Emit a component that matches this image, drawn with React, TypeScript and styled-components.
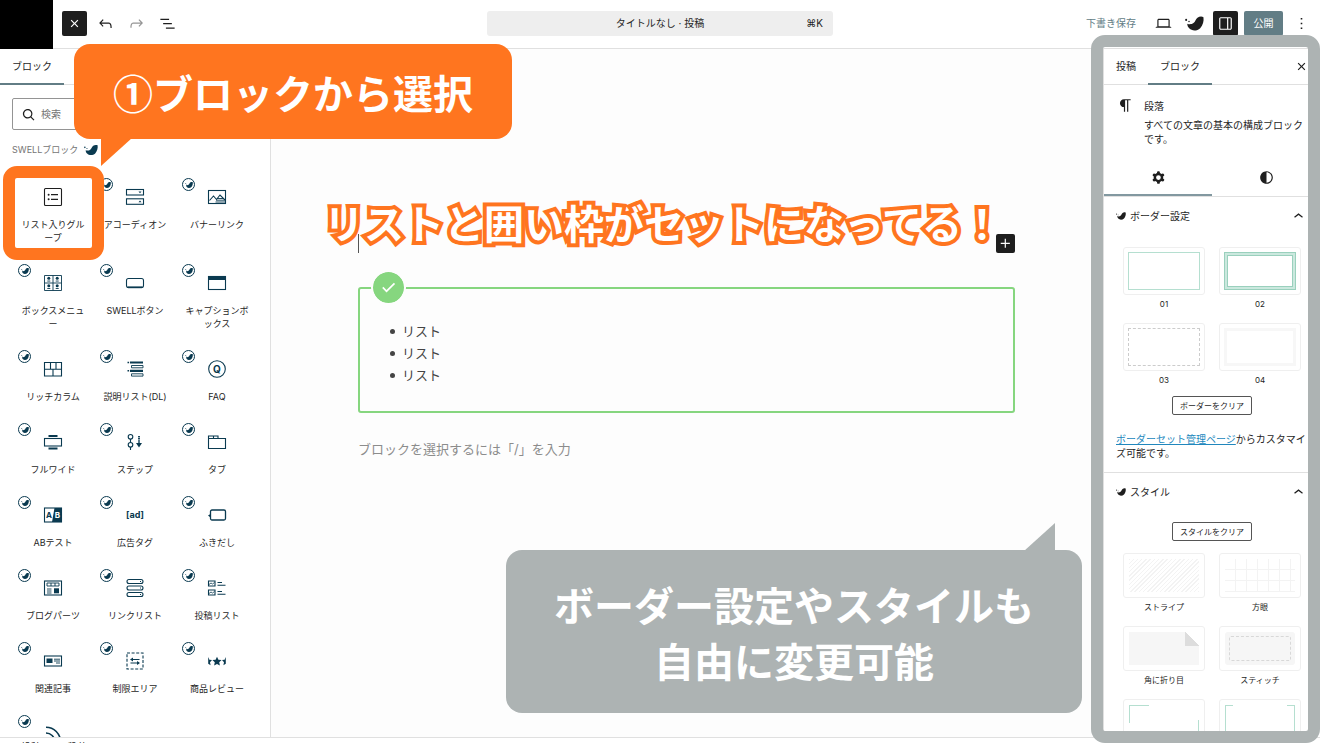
import React from "react";
import styled, { createGlobalStyle, css } from "styled-components";

const colors = {
  ink: "#1e1e1e",
  navy: "#0a3a50",
  muted: "#757575",
  line: "#e0e0e0",
  accent: "#627d85",
  orange: "#ff751f",
  gray: "#adb3b3",
  green: "#86d67f",
  mint: "#b5dfd0",
};

const GlobalStyle = createGlobalStyle`
  *, *::before, *::after { box-sizing: border-box; }
  body {
    margin: 0;
    background: #fff;
    color: ${colors.ink};
    font-family: Inter, "Noto Sans CJK JP", "DejaVu Sans", sans-serif;
    font-size: 10px;
    line-height: 14px;
  }
  button, input { font: inherit; color: inherit; }
  p, h1, h2, ul { margin: 0; padding: 0; }
  svg { display: block; flex: none; }
`;

/* ---------- Page frame ---------- */

const Shell = styled.div`
  position: relative;
  display: flex;
  flex-direction: column;
  height: 100vh;
  overflow: hidden;
`;

const Header = styled.header`
  display: grid;
  grid-template-columns: 1fr 346px 1fr;
  align-items: center;
  height: 49px;
  padding-bottom: 2px;
  flex: none;
  border-bottom: 1px solid ${colors.line};
`;

const HeaderGroup = styled.div<{ $end?: boolean }>`
  display: flex;
  align-items: center;
  gap: 6px;
  height: 46px;
  ${(p) => p.$end && css`justify-content: flex-end; padding-right: 6px;`}
`;

const SiteLogo = styled.div`
  width: 53px;
  height: 49px;
  margin-right: 3px;
  align-self: flex-start;
  background: #000;
`;

const IconButton = styled.button<{ $filled?: boolean; $dim?: boolean }>`
  display: flex;
  align-items: center;
  justify-content: center;
  width: 25px;
  height: 25px;
  padding: 0;
  border: 0;
  border-radius: 2px;
  background: ${(p) => (p.$filled ? colors.ink : "transparent")};
  color: ${(p) => (p.$filled ? "#fff" : p.$dim ? "#949494" : colors.ink)};
`;

const CommandBar = styled.button`
  display: grid;
  grid-template-columns: 1fr auto 1fr;
  align-items: center;
  height: 25px;
  padding: 0 10px;
  border: 0;
  border-radius: 3px;
  background: #eee;

  kbd {
    grid-column: 3;
    justify-self: end;
    font: inherit;
  }
  span { grid-column: 2; }
`;

const DraftButton = styled.button`
  padding: 0 9px;
  border: 0;
  background: none;
  color: ${colors.accent};
`;

const PublishButton = styled.button`
  width: 39px;
  height: 25px;
  padding: 0;
  border: 0;
  border-radius: 2px;
  background: ${colors.accent};
  color: #fff;
`;

const Body = styled.div`
  display: flex;
  flex: 1;
  min-height: 0;
`;

const Footer = styled.footer`
  display: flex;
  align-items: center;
  gap: 26px;
  height: 19px;
  margin-bottom: -13px;
  padding: 0 21px;
  flex: none;
  border-top: 1px solid ${colors.line};
  background: #fff;
`;

/* ---------- Block inserter ---------- */

const Inserter = styled.aside`
  width: 271px;
  flex: none;
  overflow: hidden;
  border-right: 1px solid ${colors.line};
`;

const TabBar = styled.div`
  display: flex;
  height: 36px;
  border-bottom: 1px solid ${colors.line};
`;

const Tab = styled.button<{ $active?: boolean }>`
  height: 36px;
  padding: 0 12px;
  border: 0;
  border-bottom: 2px solid ${(p) => (p.$active ? colors.accent : "transparent")};
  background: none;
`;

const SearchBox = styled.label`
  display: flex;
  align-items: center;
  gap: 3px;
  height: 32px;
  margin: 13px 12px 0;
  padding: 0 6px;
  border: 1px solid #949494;
  border-radius: 2px;

  input {
    flex: 1;
    min-width: 0;
    padding: 0;
    border: 0;
    outline: 0;
    background: none;
  }
  input::placeholder { color: ${colors.muted}; opacity: 1; }
`;

const CategoryTitle = styled.h2`
  display: flex;
  align-items: center;
  gap: 6px;
  height: 14px;
  margin: 13px 12px 17px;
  color: ${colors.muted};
  font-size: 9px;
  font-weight: 400;

  svg { color: ${colors.navy}; }
`;

const BlockGrid = styled.div`
  display: grid;
  grid-template-columns: repeat(3, 1fr);
  padding: 0 12px;
`;

const BlockItem = styled.button<{ $plain?: boolean }>`
  position: relative;
  display: flex;
  flex-direction: column;
  align-items: center;
  gap: 11px;
  padding: 13px 8px 16px;
  border: 0;
  background: none;
  color: ${(p) => (p.$plain ? colors.ink : colors.navy)};
`;

const BlockLabel = styled.span`
  color: ${colors.ink};
  font-size: 9px;
  line-height: 13px;
  line-break: anywhere;
`;

const BlockBadge = styled.span`
  position: absolute;
  top: 4px;
  left: 6px;
  display: flex;
  align-items: center;
  justify-content: center;
  width: 13px;
  height: 13px;
  border: 1px solid ${colors.navy};
  border-radius: 50%;
`;

const HighlightRing = styled.span`
  position: absolute;
  z-index: 2;
  inset: -8px -10px 0 -9px;
  border: 12px solid ${colors.orange};
  border-radius: 14px;
`;

/* ---------- Editor canvas ---------- */

const Canvas = styled.main`
  position: relative;
  flex: 1;
  min-width: 0;
  padding: 185px 88px 0 87px;
  background: #fdfdfd;
`;

const EmptyBlock = styled.div`
  display: flex;
  justify-content: space-between;
  height: 19px;
`;

const Caret = styled.span`
  width: 1px;
  background: #555;
`;

const AddButton = styled(IconButton)`
  width: 19px;
  height: 19px;
`;

const ListGroup = styled.section`
  position: relative;
  margin-top: 34px;
  padding: 31px 30px 25px;
  border: 2px solid ${colors.green};
  border-radius: 3px;
`;

const CheckBadge = styled.span`
  position: absolute;
  top: -19px;
  left: 11px;
  display: flex;
  align-items: center;
  justify-content: center;
  width: 35px;
  height: 35px;
  border: 2px solid #fdfdfd;
  border-radius: 50%;
  background: ${colors.green};
  background-clip: padding-box;
  box-shadow: inset 0 0 0 1px ${colors.green};
  color: #fff;
`;

const BulletList = styled.ul`
  list-style: none;
  color: #444;
  font-size: 13px;
  line-height: 22px;

  li {
    display: flex;
    align-items: center;
    gap: 7px;
  }
  li::before {
    content: "";
    width: 5px;
    height: 5px;
    border-radius: 50%;
    background: currentColor;
  }
`;

const Prompt = styled.p`
  margin-top: 25px;
  color: #8c8c8c;
  font-size: 13px;
  line-height: 22px;
`;

/* ---------- Settings sidebar ---------- */

const Settings = styled.aside`
  width: 217px;
  flex: none;
  overflow: hidden;
  border-left: 1px solid ${colors.line};
  background: #fff;
`;

const SettingsHead = styled(TabBar)`
  justify-content: space-between;
  align-items: center;
  padding-right: 6px;
`;

const BlockCard = styled.div`
  display: flex;
  gap: 9px;
  padding: 14px 12px 0;
  height: 75px;

  svg { margin: -3px 0; }
  h2 {
    margin-bottom: 5px;
    font-size: 10px;
    font-weight: 400;
  }
`;

const HalfTabs = styled.div`
  display: grid;
  grid-template-columns: 1fr 1fr;
  border-bottom: 1px solid ${colors.line};
`;

const HalfTab = styled.button<{ $active?: boolean }>`
  display: flex;
  align-items: center;
  justify-content: center;
  height: 36px;
  padding: 0;
  border: 0;
  border-bottom: 2px solid ${(p) => (p.$active ? "#8298a0" : "transparent")};
  background: none;
`;

const Panel = styled.section`
  display: flex;
  flex-direction: column;
  border-bottom: 1px solid ${colors.line};
`;

const PanelTitle = styled.button`
  display: flex;
  align-items: center;
  gap: 4px;
  height: 38px;
  padding: 0 12px;
  border: 0;
  background: none;

  svg:last-child { margin-left: auto; }
`;

const OptionGrid = styled.div`
  display: grid;
  grid-template-columns: 1fr 1fr;
  gap: 14px;
  margin-top: 12px;
  padding: 0 19px;
`;

const Option = styled.button`
  display: flex;
  flex-direction: column;
  gap: 4px;
  padding: 0;
  border: 0;
  background: none;
  font-size: 8px;
  line-height: 10px;
  text-align: center;
`;

const Swatch = styled.span<{ $short?: boolean }>`
  display: block;
  height: ${(p) => (p.$short ? 45 : 48)}px;
  padding: ${(p) => (p.$short ? 5 : 4)}px;
  border: 1px solid #efefef;
  border-radius: 3px;
`;

type Look = "solid" | "double" | "dashed" | "pale" | "stripe" | "grid" | "fold" | "stitch" | "corner" | "bracket";

const looks: Record<Look, ReturnType<typeof css>> = {
  solid: css`border: 1px solid ${colors.mint};`,
  double: css`
    border: 1px solid #9ad0bd;
    box-shadow: inset 0 0 0 2px #cbe8de, inset 0 0 0 3px #9ad0bd;
  `,
  dashed: css`border: 1px dashed #ccc;`,
  pale: css`border: 3px solid #f7f7f7;`,
  stripe: css`background: repeating-linear-gradient(-45deg, #f3f3f3 0 1px, transparent 1px 3px);`,
  grid: css`
    background:
      repeating-linear-gradient(90deg, transparent 0 10px, #f3f3f3 10px 11px),
      repeating-linear-gradient(180deg, transparent 0 10px, #f3f3f3 10px 11px);
  `,
  fold: css`
    background:
      linear-gradient(45deg, #ddd 50%, #fff 52%) top right / 14px 14px no-repeat,
      #f6f6f6;
  `,
  stitch: css`
    padding: 4px;
    border-radius: 3px;
    background: #f6f6f6;
    &::after {
      content: "";
      display: block;
      height: 100%;
      border: 1px dashed #d8d8d8;
      border-radius: 2px;
    }
  `,
  corner: css`
    background:
      linear-gradient(${colors.mint} 0 0) top left / 20px 1px no-repeat,
      linear-gradient(${colors.mint} 0 0) top left / 1px 18px no-repeat,
      linear-gradient(${colors.mint} 0 0) bottom right / 20px 1px no-repeat,
      linear-gradient(${colors.mint} 0 0) bottom right / 1px 18px no-repeat;
  `,
  bracket: css`
    background:
      linear-gradient(${colors.mint} 0 0) top left / 7px 1px no-repeat,
      linear-gradient(${colors.mint} 0 0) top right / 7px 1px no-repeat,
      linear-gradient(${colors.mint} 0 0) bottom left / 7px 1px no-repeat,
      linear-gradient(${colors.mint} 0 0) bottom right / 7px 1px no-repeat;
    border: solid ${colors.mint};
    border-width: 0 1px;
  `,
};

const Preview = styled.span<{ $look: Look }>`
  display: block;
  height: 100%;
  ${(p) => looks[p.$look]}
`;

const ClearButton = styled.button`
  align-self: center;
  width: 80px;
  height: 19px;
  margin-top: 11px;
  padding: 0;
  border: 1px solid #555;
  border-radius: 2px;
  background: none;
  font-size: 8px;
`;

const Note = styled.p`
  padding: 17px 12px 12px;
  a { color: #2187bd; }
`;

/* ---------- Callouts ---------- */

const Bubble = styled.div`
  position: absolute;
  z-index: 3;
  display: flex;
  align-items: center;
  justify-content: center;
  border-radius: 16px;
  color: #fff;
  font-family: "Noto Sans CJK JP", sans-serif;
  font-size: 40px;
  font-weight: 700;
  line-height: 56px;
  text-align: center;
  white-space: nowrap;

  &::after {
    content: "";
    position: absolute;
    width: 31px;
    height: 28px;
    background: inherit;
  }
`;

const OrangeBubble = styled(Bubble)`
  top: 44px;
  left: 74px;
  width: 438px;
  height: 95px;
  background: ${colors.orange};

  &::after {
    top: 94px;
    left: 27px;
    clip-path: polygon(0 0, 100% 0, 0 100%);
  }
`;

const GrayBubble = styled(Bubble)`
  right: 238px;
  bottom: 30px;
  width: 576px;
  height: 163px;
  background: ${colors.gray};

  &::after {
    bottom: 162px;
    right: 27px;
    clip-path: polygon(100% 0, 100% 100%, 0 100%);
  }
`;

const SidebarFrame = styled.div`
  position: absolute;
  top: 35px;
  right: 0;
  bottom: 0;
  width: 229px;
  border: 12px solid ${colors.gray};
  border-radius: 14px;
  pointer-events: none;
`;

const Headline = styled.h1`
  position: absolute;
  top: 145px;
  left: 53px;
  color: #fff;
  font-family: "Noto Sans CJK JP", sans-serif;
  font-size: 40px;
  font-weight: 700;
  line-height: 56px;
  white-space: nowrap;
  -webkit-text-stroke: 8px ${colors.orange};
  paint-order: stroke fill;
`;

/* ---------- Icons ---------- */

const UiIcon = ({ d, size = 19 }: { d: string; size?: number }) => (
  <svg width={size} height={size} viewBox="0 0 24 24" fill="currentColor" fillRule="evenodd" aria-hidden="true">
    <path d={d} />
  </svg>
);

const paths = {
  close:
    "M12 13.06l3.712 3.713 1.061-1.06L13.061 12l3.712-3.712-1.06-1.06L12 10.938 8.288 7.227l-1.061 1.06L10.939 12l-3.712 3.712 1.06 1.061L12 13.061z",
  undo: "M18.3 11.7c-.6-.6-1.4-.9-2.3-.9H6.7l2.9-3.3-1.1-1-4.5 5L8.5 16l1-1-2.7-2.7H16c.5 0 .9.2 1.3.5 1 1 1 3.4 1 4.5v.3h1.5v-.2c0-1.5 0-4.3-1.5-5.7z",
  redo: "M15.6 6.5l-1.1 1 2.9 3.3H8c-.9 0-1.7.3-2.3.9-1.4 1.5-1.4 4.2-1.4 5.6v.2h1.5v-.3c0-1.1 0-3.5 1-4.5.3-.3.7-.5 1.3-.5h9.2L14.5 15l1.1 1.1 4.6-4.6-4.6-5z",
  outline: "M3 6h11v1.5H3V6Zm3.5 5.5h11V13h-11v-1.5ZM21 17H10v1.5h11V17Z",
  laptop:
    "M20.5 16h-.7V8c0-1.1-.9-2-2-2H6.2c-1.1 0-2 .9-2 2v8h-.7c-.8 0-1.5.7-1.5 1.5h20c0-.8-.7-1.5-1.5-1.5zM5.7 8c0-.3.2-.5.5-.5h11.6c.3 0 .5.2.5.5v7.6H5.7V8z",
  drawer:
    "M18 4H6c-1.1 0-2 .9-2 2v12c0 1.1.9 2 2 2h12c1.1 0 2-.9 2-2V6c0-1.1-.9-2-2-2zm-4 14.5H6c-.3 0-.5-.2-.5-.5V6c0-.3.2-.5.5-.5h8v13zm4.5-.5c0 .3-.2.5-.5.5h-2.5v-13H18c.3 0 .5.2.5.5v12z",
  more: "M13 19h-2v-2h2v2zm0-6h-2v-2h2v2zm0-6h-2V5h2v2z",
  search:
    "M11 5c3.3 0 6 2.7 6 6 0 1.4-.5 2.7-1.3 3.7l3.8 3.8-1.1 1.1-3.8-3.8c-1 .8-2.3 1.3-3.7 1.3-3.3 0-6-2.7-6-6S7.7 5 11 5zm0 10.5c2.5 0 4.5-2 4.5-4.5s-2-4.5-4.5-4.5-4.5 2-4.5 4.5 2 4.5 4.5 4.5z",
  chevron: "M6.5 12.4L12 8l5.5 4.4-.9 1.2L12 10l-4.5 3.6-1-1.2z",
  plus: "M11 12.5V17.5H12.5V12.5H17.5V11H12.5V6H11V11H6V12.5H11Z",
  paragraph:
    "m9.996 14v-.225l.004 0v6.225h1.5v-14.5h2.5v14.5h1.5v-14.5h3v-1.5h-8.504c-2.761 0-5 2.239-5 5 0 2.761 2.239 5 5 5z",
  gear: "M10.289 4.836A1 1 0 0111.275 4h1.306a1 1 0 01.987.836l.244 1.466c.787.26 1.503.679 2.108 1.218l1.393-.522a1 1 0 011.216.437l.653 1.13a1 1 0 01-.23 1.273l-1.148.944a6.025 6.025 0 010 2.435l1.149.946a1 1 0 01.23 1.272l-.653 1.13a1 1 0 01-1.216.437l-1.394-.522c-.605.54-1.32.958-2.108 1.218l-.244 1.466a1 1 0 01-.987.836h-1.306a1 1 0 01-.986-.836l-.244-1.466a5.995 5.995 0 01-2.108-1.218l-1.394.522a1 1 0 01-1.217-.436l-.653-1.131a1 1 0 01.23-1.272l1.149-.946a6.026 6.026 0 010-2.435l-1.148-.944a1 1 0 01-.23-1.272l.653-1.131a1 1 0 011.217-.437l1.393.522a5.994 5.994 0 012.108-1.218l.244-1.466zM14.929 12a3 3 0 11-6 0 3 3 0 016 0z",
  contrast:
    "M12 4c-4.4 0-8 3.6-8 8s3.6 8 8 8 8-3.6 8-8-3.6-8-8-8zm0 1.5c3.6 0 6.5 2.9 6.5 6.5s-2.9 6.5-6.5 6.5z",
  check: "M9.5 18.2l-5.5-5.5 1.5-1.5 4 4L18.8 6l1.5 1.5z",
};

const SwellMark = ({ width = 19 }: { width?: number }) => (
  <svg width={width} height={width} viewBox="0 0 18 18" fill="currentColor" aria-hidden="true">
    <path d="M2.2 9.2C4 10 6.4 9.9 8 8.6 9.8 7.200 10 5 11.800 3.500 13.600 2.200 16.200 2.200 17.500 3 18 6.500 17 10.800 14.400 13.400 11.400 16.300 6.600 16.200 4 13.600 2.800 12.400 2.100 10.800 2.200 9.200Z" />
    <circle cx="1.100" cy="5.600" r="1" />
    <circle cx="3.800" cy="7" r=".7" />
  </svg>
);

const Glyph = ({ children }: { children: React.ReactNode }) => (
  <svg width="20" height="20" viewBox="0 0 20 20" fill="none" stroke="currentColor" strokeWidth="1.1" aria-hidden="true">
    {children}
  </svg>
);

const solid = { fill: "currentColor", stroke: "none" };
const lettering = { ...solid, fontFamily: "Inter, sans-serif", fontWeight: 700, textAnchor: "middle" as const };

const blocks: { label: string; plain?: boolean; icon: React.ReactNode }[] = [
  {
    label: "リスト入りグループ",
    plain: true,
    icon: (
      <>
        <rect x="1.5" y="1.5" width="17" height="17" rx="1" />
        <path d="M8 7.7h7M8 12.3h7" strokeWidth="1.3" />
        <circle cx="5.6" cy="7.7" r="1" {...solid} />
        <circle cx="5.6" cy="12.3" r="1" {...solid} />
      </>
    ),
  },
  {
    label: "アコーディオン",
    icon: (
      <>
        <rect x="1.5" y="2.5" width="17" height="5.5" />
        <rect x="1.5" y="11.8" width="17" height="5.5" />
        <path d="M13.5 4.5h3l-1.5 1.8zM13.5 15.3h3l-1.5-1.8z" {...solid} />
      </>
    ),
  },
  {
    label: "バナーリンク",
    icon: (
      <>
        <rect x="1.5" y="3.5" width="17" height="13" />
        <path d="M2.5 13.5L6.5 9l3 3.5 3.5-4.5 5 5" />
        <path d="M10 11.5h7M9 13.2h9M8.5 15h9.5" strokeWidth=".9" />
      </>
    ),
  },
  {
    label: "ボックスメニュー",
    icon: (
      <>
        <path d="M1.5 2.5h17v15h-17zM10 2.5v15M1.5 10h17" strokeWidth=".9" />
        {[5.8, 14.2].map((x) =>
          [5.2, 12.7].map((y) => (
            <g key={`${x}-${y}`} {...solid}>
              <circle cx={x} cy={y} r="1.5" />
              <rect x={x - 1.5} y={y + 2.4} width="3" height=".9" />
            </g>
          )),
        )}
      </>
    ),
  },
  {
    label: "SWELLボタン",
    icon: (
      <>
        <rect x="1.5" y="5.5" width="17" height="9" rx="2" />
        <path d="M3 14.3h14" strokeWidth="1.8" />
      </>
    ),
  },
  {
    label: "キャプションボックス",
    icon: (
      <>
        <rect x="1.5" y="3.5" width="17" height="13" />
        <rect x="1" y="3" width="18" height="4" {...solid} />
      </>
    ),
  },
  {
    label: "リッチカラム",
    icon: <path d="M1.5 3.5h17v13.5h-17zM1.5 10.2h17M7.5 3.5v6.7M13 3.5v6.7M10 10.2V17" />,
  },
  {
    label: "説明リスト(DL)",
    icon: (
      <>
        <path d="M5 3.5h13M5 11.8h13" strokeWidth="2.2" />
        <path d="M2.5 3.5h1.6M2.5 11.8h1.6" strokeWidth="1.6" />
        <path d="M6.5 6.5h11.5v2.3H6.5zM6.5 14.8h11.5v2.3H6.5z" strokeWidth=".9" />
      </>
    ),
  },
  {
    label: "FAQ",
    icon: (
      <>
        <circle cx="10" cy="10" r="8.3" />
        <text x="10" y="13.5" fontSize="10" {...lettering}>Q</text>
      </>
    ),
  },
  {
    label: "フルワイド",
    icon: (
      <>
        <rect x="1.5" y="6.5" width="17" height="7.5" />
        <path d="M5.5 4h9M5.5 16.5h9" strokeWidth="1.8" />
      </>
    ),
  },
  {
    label: "ステップ",
    icon: (
      <>
        <circle cx="5.5" cy="4.8" r="2.3" />
        <circle cx="5.5" cy="12.8" r="2.3" />
        <path d="M5.5 7.1v3.4M5.5 15.1v3" />
        <path d="M14 4v8" strokeWidth="1.8" strokeDasharray="1.5 .6" />
        <path d="M11 11h6l-3 4.5z" {...solid} />
      </>
    ),
  },
  {
    label: "タブ",
    icon: <path d="M1.5 16.5V4h9.5v2.5h7.5v10zM1.5 6.5H11M6.5 4v2.5" />,
  },
  {
    label: "ABテスト",
    icon: (
      <>
        <rect x="1.5" y="3" width="17" height="14" />
        <path d="M11.5 3h7v14h-9.5z" {...solid} />
        <text x="6" y="13" fontSize="8" {...lettering}>A</text>
        <text x="14.3" y="13" fontSize="8" {...lettering} fill="#fff">B</text>
      </>
    ),
  },
  {
    label: "広告タグ",
    icon: <text x="10" y="13" fontSize="9" {...lettering}>[ad]</text>,
  },
  {
    label: "ふきだし",
    icon: (
      <>
        <rect x="3.5" y="5" width="15" height="10" rx="1.5" strokeWidth="1.3" />
        <path d="M3.5 9L1 10.5 3.5 12.5z" {...solid} />
      </>
    ),
  },
  {
    label: "ブログパーツ",
    icon: (
      <>
        <rect x="1.5" y="3" width="17" height="14" />
        <path d="M4 5h12v3H4zM8 5v3M12 5v3" strokeWidth=".9" />
        <path d="M4 11h4.5M4 13h4.5M4 15h4.5" strokeWidth=".9" />
        <rect x="11" y="10.3" width="5" height="5" {...solid} />
      </>
    ),
  },
  {
    label: "リンクリスト",
    icon: (
      <>
        {[1.5, 8, 14.5].map((y) => (
          <rect key={y} x="2" y={y} width="16" height="4" rx="2" />
        ))}
        <path d="M15 3.5h1M15 10h1M15 16.5h1" />
      </>
    ),
  },
  {
    label: "投稿リスト",
    icon: (
      <>
        <path d="M1.5 3h6.5v5H1.5zM1.5 12h6.5v5H1.5z" />
        <path d="M2 6.5l2-1.5 1.5 1L7.5 4.5M2 15.5l2-1.5 1.5 1 2-1.5" strokeWidth=".8" />
        <path d="M10.500 4.500h4.500M10.500 7.300h8M10.500 13.500h4.500M10.500 16.300h8" />
      </>
    ),
  },
  {
    label: "関連記事",
    icon: (
      <>
        <rect x="1.5" y="5" width="17" height="10" />
        <rect x="3.5" y="7.5" width="6" height="4.5" {...solid} />
        <path d="M11 8.2h6M11 10h6M13 12h4" strokeWidth=".9" />
      </>
    ),
  },
  {
    label: "制限エリア",
    icon: (
      <>
        <rect x="2" y="2" width="16" height="16" strokeDasharray="3 1.6" />
        <path d="M6 8.5h8.5M5.5 12h8.5" />
        <path d="M8 6.5v4L5 8.5zM12 10v4l3-2z" {...solid} />
      </>
    ),
  },
  {
    label: "商品レビュー",
    icon: (
      <g {...solid}>
        <path d="M10 5.800l1.400 3 3.200.3-2.400 2.200.7 3.200-2.900-1.600-2.900 1.600.7-3.200-2.400-2.200 3.200-.3z" />
        <path d="M1.200 6l1.200 2.800 2.600.3-2 2.200.6 3-2.400-1.500zM18.800 6l-1.200 2.800-2.600.3 2 2.200-.6 3 2.400-1.500z" />
      </g>
    ),
  },
  {
    label: "RSS",
    icon: (
      <>
        <path d="M3 3.2A14.5 14.5 0 0 1 17.5 17.7M3 9a8.7 8.7 0 0 1 8.7 8.7" strokeWidth="1.6" />
        <circle cx="4.5" cy="16" r="1.8" {...solid} />
      </>
    ),
  },
];

const borderOptions: { label: string; look: Look }[] = [
  { label: "01", look: "solid" },
  { label: "02", look: "double" },
  { label: "03", look: "dashed" },
  { label: "04", look: "pale" },
];

const styleOptions: { label: string; look: Look }[] = [
  { label: "ストライプ", look: "stripe" },
  { label: "方眼", look: "grid" },
  { label: "角に折り目", look: "fold" },
  { label: "スティッチ", look: "stitch" },
  { label: "コーナー", look: "corner" },
  { label: "カギ括弧", look: "bracket" },
];

const OptionCard = ({ label, look, short }: { label: string; look: Look; short?: boolean }) => (
  <Option type="button">
    <Swatch $short={short}>
      <Preview $look={look} />
    </Swatch>
    {label}
  </Option>
);

export default function App() {
  return (
    <Shell>
      <GlobalStyle />
      <Header>
        <HeaderGroup>
          <SiteLogo />
          <IconButton type="button" $filled aria-label="閉じる"><UiIcon d={paths.close} /></IconButton>
          <IconButton type="button" aria-label="元に戻す"><UiIcon d={paths.undo} /></IconButton>
          <IconButton type="button" $dim aria-label="やり直す"><UiIcon d={paths.redo} /></IconButton>
          <IconButton type="button" aria-label="リスト表示"><UiIcon d={paths.outline} /></IconButton>
        </HeaderGroup>
        <CommandBar type="button">
          <span>タイトルなし · 投稿</span>
          <kbd>⌘K</kbd>
        </CommandBar>
        <HeaderGroup $end>
          <DraftButton type="button">下書き保存</DraftButton>
          <IconButton type="button" aria-label="プレビュー"><UiIcon d={paths.laptop} /></IconButton>
          <IconButton type="button" aria-label="SWELL設定"><SwellMark /></IconButton>
          <IconButton type="button" $filled aria-label="設定"><UiIcon d={paths.drawer} /></IconButton>
          <PublishButton type="button">公開</PublishButton>
          <IconButton type="button" aria-label="オプション"><UiIcon d={paths.more} /></IconButton>
        </HeaderGroup>
      </Header>

      <Body>
        <Inserter>
          <TabBar>
            <Tab type="button" $active>ブロック</Tab>
          </TabBar>
          <SearchBox>
            <UiIcon d={paths.search} />
            <input type="search" placeholder="検索" aria-label="検索" />
          </SearchBox>
          <CategoryTitle>
            SWELLブロック
            <SwellMark width={14} />
          </CategoryTitle>
          <BlockGrid>
            {blocks.map((block) => (
              <BlockItem key={block.label} type="button" $plain={block.plain}>
                {block.plain ? <HighlightRing /> : <BlockBadge><SwellMark width={8} /></BlockBadge>}
                <Glyph>{block.icon}</Glyph>
                <BlockLabel>{block.label}</BlockLabel>
              </BlockItem>
            ))}
          </BlockGrid>
        </Inserter>

        <Canvas>
          <EmptyBlock>
            <Caret />
            <AddButton type="button" $filled aria-label="ブロックを追加"><UiIcon d={paths.plus} /></AddButton>
          </EmptyBlock>
          <Headline>リストと囲い枠がセットになってる！</Headline>
          <ListGroup>
            <CheckBadge><UiIcon d={paths.check} /></CheckBadge>
            <BulletList>
              <li>リスト</li>
              <li>リスト</li>
              <li>リスト</li>
            </BulletList>
          </ListGroup>
          <Prompt>ブロックを選択するには「/」を入力</Prompt>
        </Canvas>

        <Settings>
          <SettingsHead>
            <div>
              <Tab type="button">投稿</Tab>
              <Tab type="button" $active>ブロック</Tab>
            </div>
            <IconButton type="button" aria-label="設定を閉じる"><UiIcon d={paths.close} /></IconButton>
          </SettingsHead>
          <BlockCard>
            <UiIcon d={paths.paragraph} />
            <div>
              <h2>段落</h2>
              <p>すべての文章の基本の構成ブロックです。</p>
            </div>
          </BlockCard>
          <HalfTabs>
            <HalfTab type="button" $active aria-label="設定"><UiIcon d={paths.gear} /></HalfTab>
            <HalfTab type="button" aria-label="スタイル"><UiIcon d={paths.contrast} /></HalfTab>
          </HalfTabs>
          <Panel>
            <PanelTitle type="button">
              <SwellMark width={10} />
              ボーダー設定
              <UiIcon d={paths.chevron} />
            </PanelTitle>
            <OptionGrid>
              {borderOptions.map((o) => <OptionCard key={o.label} {...o} />)}
            </OptionGrid>
            <ClearButton type="button">ボーダーをクリア</ClearButton>
            <Note><a href="#border">ボーダーセット管理ページ</a>からカスタマイズ可能です。</Note>
          </Panel>
          <Panel>
            <PanelTitle type="button">
              <SwellMark width={10} />
              スタイル
              <UiIcon d={paths.chevron} />
            </PanelTitle>
            <ClearButton type="button">スタイルをクリア</ClearButton>
            <OptionGrid>
              {styleOptions.map((o) => <OptionCard key={o.label} {...o} short />)}
            </OptionGrid>
          </Panel>
        </Settings>
      </Body>

      <Footer>
        <span>投稿</span>
        <span>段落</span>
      </Footer>

      <SidebarFrame />
      <OrangeBubble>①ブロックから選択</OrangeBubble>
      <GrayBubble>ボーダー設定やスタイルも<br />自由に変更可能</GrayBubble>
    </Shell>
  );
}
